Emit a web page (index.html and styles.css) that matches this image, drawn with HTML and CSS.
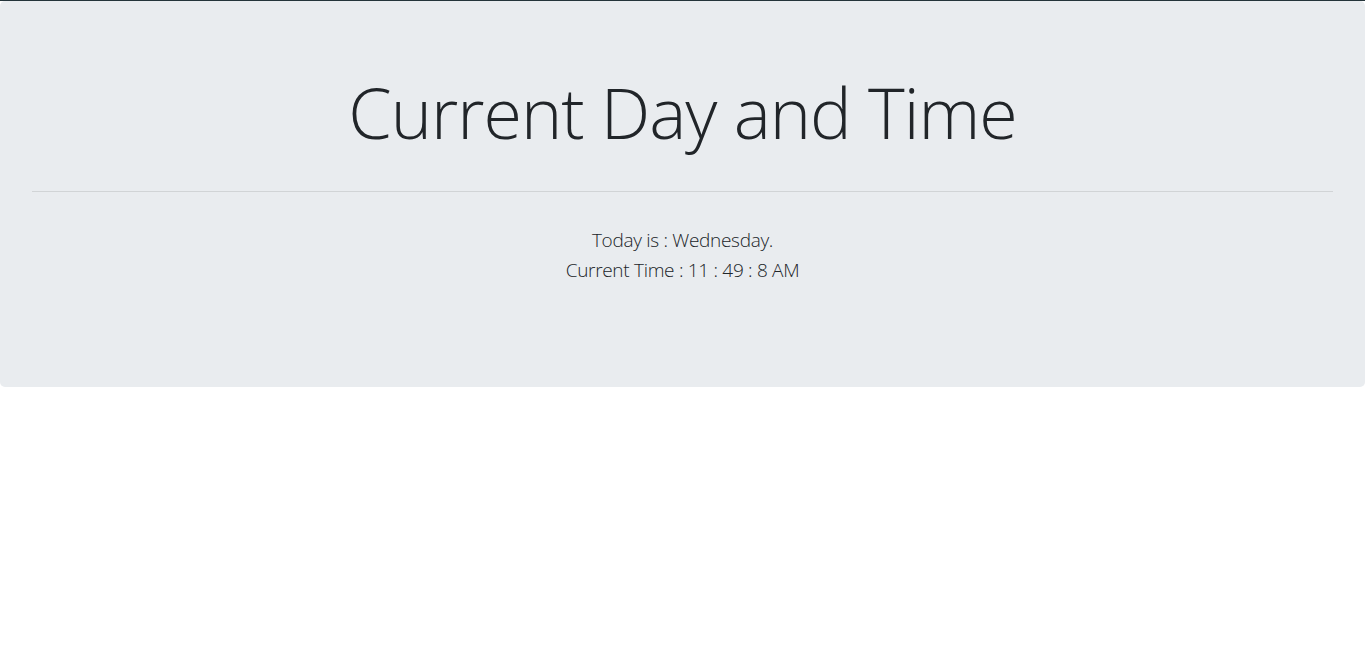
FILE: index.html
```html
<!DOCTYPE html>
<html lang="en">
<head>
<meta charset="utf-8">
<title>Current Day and Time</title>
<link rel="stylesheet" href="styles.css">
</head>
<body>
<div class="topline"></div>
<div class="jumbotron">
  <h1 class="display">Current Day and Time</h1>
  <hr class="divider">
  <p class="lead">Today is : Wednesday.</p>
  <p class="lead">Current Time : 11 : 49 : 8 AM</p>
</div>
</body>
</html>
```
FILE: styles.css
```css
html, body {
  margin: 0;
  padding: 0;
  background: #fff;
}
body {
  font-family: "Open Sans", "Segoe UI", Roboto, sans-serif;
  color: #212529;
}
.topline {
  height: 1px;
  background: #24343a;
}
.jumbotron {
  background: #e9ecef;
  border-radius: 5px;
  padding: 68px 32px 0;
  height: 386px;
  box-sizing: border-box;
}
.display {
  margin: 0;
  font-size: 70px;
  font-weight: 300;
  line-height: 86px;
  letter-spacing: -1px;
  text-align: center;
  color: #212529;
}
.divider {
  margin: 36px 0 33px;
  border: 0;
  border-top: 1px solid rgba(0,0,0,0.1);
}
.lead {
  margin: 0;
  font-size: 19px;
  font-weight: 300;
  line-height: 30px;
  letter-spacing: -0.3px;
  text-align: center;
  color: #212529;
}
```
